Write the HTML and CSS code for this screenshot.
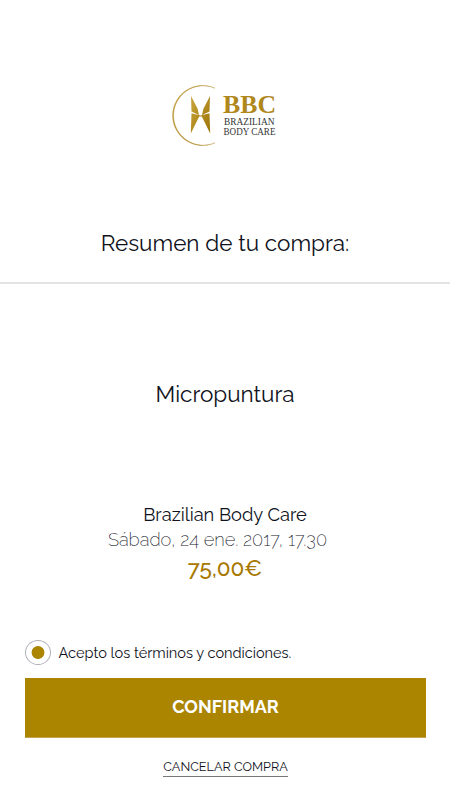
FILE: index.html
```
<!DOCTYPE html>
<html lang="es">
<head>
    <meta charset="UTF-8">
    <meta name="viewport" content="width=device-width, initial-scale=1.0">
    <title>Resumen de tu compra</title>
    <link rel="stylesheet" href="styles.css">
</head>
<body>
    <div class="container">
        <header class="header">
            <svg class="logo" width="120" height="70" viewBox="0 0 120 70" role="img" aria-label="Brazilian Body Care">
                <defs>
                    <linearGradient id="gold" x1="0" y1="0" x2="1" y2="1">
                        <stop offset="0" stop-color="#c9a53c"/>
                        <stop offset="1" stop-color="#9c7406"/>
                    </linearGradient>
                </defs>
                <path d="M50 7.2A29.7 29.7 0 1 0 50 61.8A30 30 0 1 1 50 7.2Z" fill="url(#gold)" stroke="#b99640" stroke-width="0.4"/>
                <path d="M26 15L32.6 27.7L34 34L35.5 34.6L37 34L38.4 27.7L45 15L44.5 30.4L36.8 34.3L44.5 32.2L45.2 52.5L38.8 39.5L36.8 35.4H34.2L32.2 39.5L25.8 52.5L26.5 32.2L34.2 34.3L26.5 30.4Z" fill="url(#gold)"/>
                <text class="logo-title" x="58" y="32.3" textLength="53" lengthAdjust="spacingAndGlyphs">BBC</text>
                <text class="logo-text" x="59" y="43.5" textLength="50.5" lengthAdjust="spacingAndGlyphs">BRAZILIAN</text>
                <text class="logo-text" x="58.5" y="54.3" textLength="52" lengthAdjust="spacingAndGlyphs">BODY CARE</text>
            </svg>
            <h1>Resumen de tu compra:</h1>
        </header>

        <main class="summary">
            <h2>Micropuntura</h2>
            <div class="place">Brazilian Body Care</div>
            <div class="date">Sábado, 24 ene. 2017, 17.30</div>
            <div class="price">75,00€</div>
        </main>

        <form class="actions">
            <label class="terms">
                <input type="radio" name="terms" checked>
                <span>Acepto los términos y condiciones.</span>
            </label>
            <button class="confirm" type="button">CONFIRMAR</button>
            <a class="cancel" href="#">CANCELAR COMPRA</a>
        </form>
    </div>
</body>
</html>
```
FILE: styles.css
```
* {
    box-sizing: border-box;
}
body {
    margin: 0;
    background: #fff;
    font-family: Raleway, Lato, sans-serif;
    color: #10121c;
}
.container {
    height: 800px;
    display: flex;
    flex-direction: column;
    overflow: hidden;
}

.header {
    height: 284px;
    padding-top: 81px;
    display: flex;
    flex-direction: column;
    align-items: center;
    border-bottom: 2px solid #e3e3e3;
}
.logo-title {
    font: bold 25px "Liberation Serif", serif;
    fill: #b0871b;
}
.logo-text {
    font: 9.5px "Liberation Serif", serif;
    fill: #333;
}
h1, h2 {
    margin: 0;
    font-size: 22.5px;
    line-height: 28px;
    font-weight: 400;
    white-space: nowrap;
}
h1 {
    margin-top: 78px;
}

.summary {
    height: 354px;
    padding-top: 96px;
    display: flex;
    flex-direction: column;
    align-items: center;
    white-space: nowrap;
}
.place {
    margin-top: 94px;
    font-size: 18.3px;
    line-height: 26px;
}
.date {
    margin-right: 15px;
    font-size: 18.3px;
    line-height: 24px;
    font-weight: 200;
}
.price {
    margin-top: 1px;
    font-size: 22.5px;
    line-height: 30px;
    font-weight: 500;
    color: #a87800;
}

.actions {
    padding: 0 24px 0 25px;
    display: flex;
    flex-direction: column;
    align-items: center;
}
.terms {
    align-self: flex-start;
    height: 40px;
    padding-top: 2px;
    display: flex;
    gap: 7.5px;
    font-size: 14.55px;
    line-height: 26px;
    white-space: nowrap;
}
.terms input {
    appearance: none;
    width: 26px;
    height: 25px;
    margin: 0;
    border: 1px solid #b0b0ba;
    border-radius: 50%;
    background: radial-gradient(circle, #ab8500 6px, transparent 6.8px);
}
.confirm {
    width: 100%;
    height: 60px;
    padding: 0 0 2px;
    border: 0;
    border-bottom: 1px solid #c5a24c;
    background: #ab8500;
    color: #fff;
    font-family: inherit;
    font-size: 18px;
    font-weight: 700;
}
.cancel {
    margin-top: 20px;
    padding-bottom: 1px;
    border-bottom: 1px solid #777;
    color: #10121c;
    font-size: 12.65px;
    line-height: 17px;
    text-decoration: none;
    white-space: nowrap;
}
```
